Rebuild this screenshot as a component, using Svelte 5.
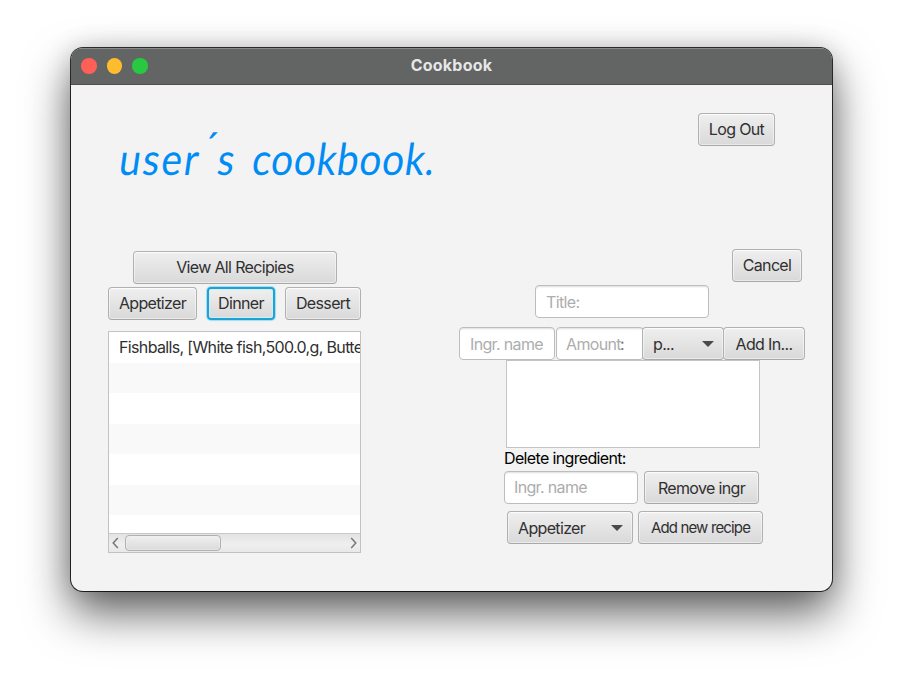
<script>
  let active = $state('Dinner');
  const categories = [
    { name: 'Appetizer', cls: 'appetizer' },
    { name: 'Dinner', cls: 'dinner' },
    { name: 'Dessert', cls: 'dessert' }
  ];
  const recipes = ['Fishballs, [White fish,500.0,g, Butter,100.0,g', '', '', '', '', '', ''];
</script>

<div class="desktop">
  <section class="window">
    <header class="titlebar">
      <div class="lights"><i class="red"></i><i class="yellow"></i><i class="green"></i></div>
      <span class="wtitle">Cookbook</span>
    </header>

    <div class="content">
      <div class="top">
        <h1><span class="owner">user<span class="accent">´</span>s</span><span class="book">cookbook.</span></h1>
        <button class="btn logout">Log Out</button>
      </div>

      <main>
        <div class="left">
          <button class="btn viewall">View All Recipies</button>
          <div class="cats">
            {#each categories as c}
              <button class="btn {c.cls}" class:focused={active === c.name} onclick={() => (active = c.name)}>{c.name}</button>
            {/each}
          </div>
          <div class="list">
            <div class="rows">
              {#each recipes as r}
                <div class="row">{r}</div>
              {/each}
            </div>
            <div class="scroll">
              <svg width="16" height="19" viewBox="0 0 16 19"><path d="M8.8 4.1 4.2 9.1l4.6 5" /></svg>
              <div class="thumb"></div>
              <svg class="end" width="16" height="19" viewBox="0 0 16 19"><path d="M7.2 4.1l4.6 5-4.6 5" /></svg>
            </div>
          </div>
        </div>

        <div class="right">
          <button class="btn cancel">Cancel</button>
          <div class="field title">Title:</div>
          <div class="line">
            <div class="field ingr">Ingr. name</div>
            <div class="field amount">Amount<span>:</span></div>
            <button class="btn combo unit"><span>p...</span><b></b></button>
            <button class="btn addin">Add In...</button>
          </div>
          <div class="area"></div>
          <div class="label">Delete ingredient:</div>
          <div class="line remove-line">
            <div class="field del">Ingr. name</div>
            <button class="btn remove">Remove ingr</button>
          </div>
          <div class="line add-line">
            <button class="btn combo kind"><span>Appetizer</span><b></b></button>
            <button class="btn addnew">Add new recipe</button>
          </div>
        </div>
      </main>
    </div>
  </section>
</div>

<style>
  :global(body) { background: #fff; }
  .desktop {
    width: 904px; height: 686px; box-sizing: border-box; padding: 48px 0 0 71px; overflow: hidden;
    font-family: Inter, "Liberation Sans", sans-serif; font-size: 16px; letter-spacing: -0.65px; color: #303030;
  }
  .window {
    width: 761px; height: 543px; border-radius: 12px; background: #f3f3f3; overflow: hidden;
    box-shadow: 0 0 0 1px rgba(0, 0, 0, .8), 0 22px 46px 0 rgba(0, 0, 0, .62), 0 0 26px rgba(0, 0, 0, .16);
  }
  .titlebar {
    height: 37px; box-sizing: border-box; background: #636564; display: grid; grid-template-columns: 1fr auto 1fr;
    align-items: center; border-top: 1px solid #898b8a; border-bottom: 1px solid #4f5150;
  }
  .lights { display: flex; gap: 10px; padding: 0 0 1px 10px; }
  .lights i { width: 15.5px; height: 15.5px; border-radius: 50%; }
  .red { background: #ff5f57; }
  .yellow { background: #febc2e; }
  .green { background: #28c840; }
  .wtitle { color: #e7e7e7; font-weight: 700; font-size: 16px; letter-spacing: .25px; line-height: 20px; padding-bottom: 4px; }

  .top { height: 164px; display: flex; justify-content: space-between; align-items: flex-start; padding: 28px 57px 0 47px; box-sizing: border-box; }
  h1 {
    margin: 15px 0 0; display: flex; font: 400 44px/60px Lato, sans-serif; color: #008cf5; white-space: nowrap;
    transform: skewX(-8deg) scaleX(.88); transform-origin: 0 44px;
  }
  .owner { width: 151px; letter-spacing: 2.2px; }
  .accent { position: relative; top: -11px; }
  .book { letter-spacing: .9px; }

  .btn, .field { box-sizing: border-box; height: 33px; border-radius: 4px; flex: none; white-space: nowrap; overflow: hidden; }
  .btn {
    font: inherit; letter-spacing: inherit; color: inherit; padding: 0; border: 1px solid #b1b1b1; border-bottom-color: #a8a8a8;
    background: linear-gradient(#efefef, #d9d9d9); box-shadow: inset 0 0 0 1px rgba(255, 255, 255, .45), inset 0 1px 0 #fafafa;
    display: flex; align-items: center; justify-content: center;
  }
  .field {
    background: #fff; border: 1px solid #bdbdbd; box-shadow: inset 0 2px 2px -1px #ddd; color: #adadad;
    padding-left: 10px; line-height: 31px;
  }
  .logout, .viewall, .cats .btn, .cancel { padding-bottom: 2px; }
  .logout { width: 77px; }
  main { display: flex; align-items: flex-start; padding-left: 37px; }
  .left { width: 253px; padding-top: 2px; display: flex; flex-direction: column; }
  .viewall { width: 204px; margin-left: 25px; }
  .cats { display: flex; justify-content: space-between; margin-top: 3px; }
  .appetizer { width: 89px; }
  .dinner { width: 68px; }
  .dessert { width: 76px; }
  .focused { border: 2px solid #1aa3d5; box-shadow: 0 0 1px 1px #a7dced, inset 0 0 1px 1px #d3edf5; }
  .list { margin-top: 11px; box-sizing: border-box; height: 222px; border: 1px solid #c2c2c2; background: #fff; display: flex; flex-direction: column; }
  .rows { height: 201px; overflow: hidden; }
  .row { height: 30.5px; padding-left: 10px; line-height: 31px; white-space: nowrap; }
  .row:nth-child(even) { background: #f9f9f9; }
  .scroll {
    height: 19px; box-sizing: border-box; border-top: 1px solid #c8cac9; background: linear-gradient(#e3e3e3, #efefef 60%, #e8e8e8);
    display: flex; align-items: center;
  }
  .scroll svg { flex: none; fill: none; stroke: #777; stroke-width: 1.5; }
  .scroll .end { margin-left: auto; }
  .thumb { width: 96px; height: 16px; box-sizing: border-box; border: 1px solid #b1b1b1; border-radius: 4px; background: linear-gradient(#efefef, #dadada); box-shadow: inset 0 0 0 1px #f0f0f088; }

  .right { margin-left: 98px; width: 346px; display: flex; flex-direction: column; align-items: flex-start; }
  .cancel { width: 70px; margin-left: 273px; }
  .title { width: 174px; margin: 3px 0 0 76px; line-height: 33px; }
  .line { display: flex; }
  .title + .line { margin-top: 9px; }
  .ingr, .amount { line-height: 32px; }
  .ingr { width: 96px; }
  .amount { width: 88px; margin-left: 1px; padding-left: 9px; }
  .amount span { color: #777; margin-left: -1px; }
  .unit { width: 82px; margin-left: -2px; }
  .addin { width: 82px; margin-left: -1px; }
  .combo { justify-content: space-between; padding: 0 9px 0 10px; }
  .combo b { border: 6px solid transparent; border-top-color: #4a4a4a; border-bottom: 0; }
  .area { box-sizing: border-box; width: 254px; height: 88px; margin-left: 47px; border: 1px solid #c4c4c4; background: #fff; }
  .label { margin-left: 45px; height: 23px; line-height: 21px; color: #000; }
  .remove-line { margin-left: 45px; gap: 6px; }
  .del { width: 134px; padding-left: 9px; }
  .remove { width: 115px; }
  .add-line { margin: 7px 0 0 48px; gap: 5px; }
  .kind { width: 126px; }
  .addnew { width: 125px; font-size: 15px; letter-spacing: -.85px; }
</style>
